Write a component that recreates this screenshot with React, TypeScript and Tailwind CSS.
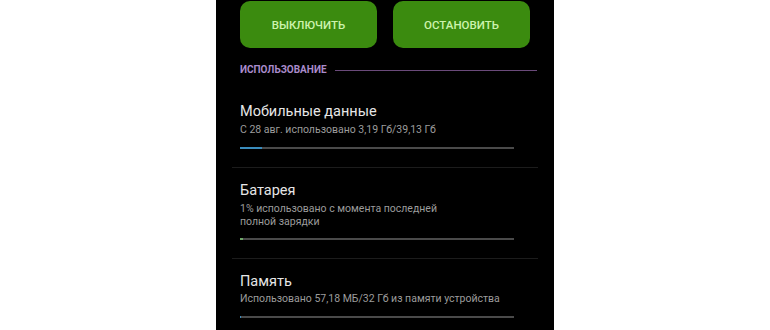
import React from "react";

function Bar({ fill, color }: { fill: number; color: string }) {
  return (
    <div className="mt-[10px] h-[2px] w-[274px] bg-[#4a4a4a]">
      <div className="h-full" style={{ width: `${fill}px`, backgroundColor: color }} />
    </div>
  );
}

function Divider() {
  return <div className="mx-[-8px] mt-[18px] h-px bg-[#1c1c1c]" />;
}

export default function App() {
  return (
    <div className="flex h-[330px] w-[770px] justify-center bg-white" style={{ fontFamily: "Roboto, 'Noto Sans', sans-serif" }}>
      <div className="h-[330px] w-[338px] overflow-hidden bg-black px-6">
        <div className="mt-px flex gap-4">
          <button className="flex h-[47px] w-[137px] items-center justify-center rounded-[10px] bg-[#3b8b0f] pt-[2px] text-[11.5px] font-medium text-[#cdf3ad]">
            ВЫКЛЮЧИТЬ
          </button>
          <button className="flex h-[47px] w-[137px] items-center justify-center rounded-[10px] bg-[#3b8b0f] pt-[2px] text-[11.5px] font-medium text-[#cdf3ad]">
            ОСТАНОВИТЬ
          </button>
        </div>

        <div className="mt-[15px] flex items-center gap-2">
          <span className="text-[10px] leading-[14px] font-bold text-[#a98bcb]">ИСПОЛЬЗОВАНИЕ</span>
          <div className="mr-[-7px] h-px flex-1 bg-[#6a4a7a]" />
        </div>

        <div className="mt-[25px]">
          <div className="text-[14.5px] leading-[20px] text-[#e6e6e6]">Мобильные данные</div>
          <div className="mt-px text-[10.5px] leading-[14px] text-[#9c9c9c]">С 28 авг. использовано 3,19 Гб/39,13 Гб</div>
          <Bar fill={22} color="#3a8cbc" />
          <Divider />
        </div>

        <div className="mt-[13px]">
          <div className="text-[14.5px] leading-[20px] text-[#e6e6e6]">Батарея</div>
          <div className="mt-px w-[230px] text-[10.5px] leading-[13px] text-[#9c9c9c]">
            1% использовано с момента последней полной зарядки
          </div>
          <div className="mt-[10px] h-[2px] w-[274px] bg-[#4a4a4a]">
            <div className="h-full w-[3px] bg-[#6fa86a]" />
          </div>
          <Divider />
        </div>

        <div className="mt-[13px]">
          <div className="text-[14.5px] leading-[20px] text-[#e6e6e6]">Память</div>
          <div className="text-[10.5px] leading-[14px] text-[#9c9c9c]">Использовано 57,18 МБ/32 Гб из памяти устройства</div>
          <Bar fill={1} color="#3a8cbc" />
        </div>
      </div>
    </div>
  );
}
